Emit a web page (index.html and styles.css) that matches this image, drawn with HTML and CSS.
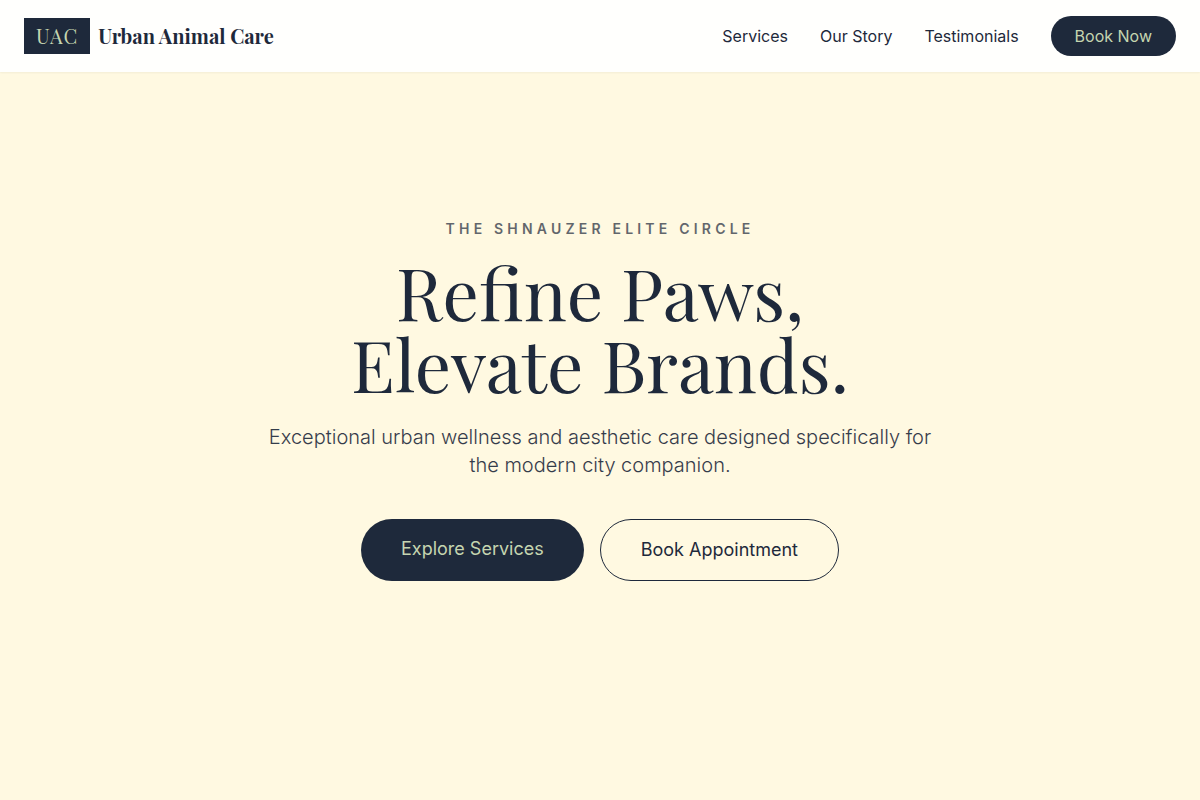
FILE: index.html
```html
<!DOCTYPE html>
<html lang="en">

<head>
    <meta charset="UTF-8">
    <meta name="viewport" content="width=device-width, initial-scale=1.0">
    <title>Urban Animal Care</title>
    <link rel="stylesheet" href="styles.css">
</head>

<body>

    <header class="header">
        <a href="#" class="logo">
            <span class="logo-mark">UAC</span>
            <span class="logo-name">Urban Animal Care</span>
        </a>
        <nav class="nav">
            <a href="#services">Services</a>
            <a href="#story">Our Story</a>
            <a href="#testimonials">Testimonials</a>
            <a href="#book" class="nav-book">Book Now</a>
        </nav>
    </header>

    <main class="hero">
        <p class="eyebrow">The Shnauzer Elite Circle</p>
        <h1>Refine Paws,<br>Elevate Brands.</h1>
        <p class="intro">Exceptional urban wellness and aesthetic care designed specifically for the modern city companion.</p>
        <div class="actions">
            <a href="#services" class="btn btn-dark">Explore Services</a>
            <a href="#book" class="btn btn-line">Book Appointment</a>
        </div>
    </main>

</body>

</html>
```

FILE: styles.css
```css
* {
    margin: 0;
    padding: 0;
    box-sizing: border-box;
}

body {
    display: flex;
    flex-direction: column;
    min-height: 100vh;
    background-color: #fff9e1;
    color: #1e293b;
    font-family: Inter, "Liberation Sans", sans-serif;
    font-size: 16px;
    line-height: 24px;
}

a {
    color: inherit;
    text-decoration: none;
}

.header {
    position: sticky;
    top: 0;
    display: flex;
    justify-content: space-between;
    align-items: center;
    padding: 16px 24px;
    background-color: #fffffd;
    box-shadow: 0 1px 2px rgba(0, 0, 0, 0.05);
}

.logo {
    display: flex;
    align-items: center;
    gap: 8px;
    font-family: "Playfair Display", "Liberation Serif", serif;
    font-size: 20px;
    line-height: 28px;
}

.logo-mark {
    padding: 4px 12px;
    background-color: #1e293b;
    color: #c5d5b0;
    letter-spacing: 1px;
}

.logo-name {
    font-weight: 700;
}

.nav {
    display: flex;
    align-items: center;
    gap: 32px;
}

.nav-book {
    padding: 8px 24px;
    border-radius: 999px;
    background-color: #1e293b;
    color: #c5d5b0;
}

/* bottom padding balances the header so the text centers in the window */
.hero {
    flex: 1;
    display: flex;
    flex-direction: column;
    align-items: center;
    justify-content: center;
    padding: 0 24px 72px;
    text-align: center;
}

.eyebrow {
    margin-bottom: 16px;
    font-size: 14px;
    line-height: 20px;
    font-weight: 600;
    letter-spacing: 0.3em;
    text-transform: uppercase;
    opacity: 0.7;
}

h1 {
    margin-bottom: 24px;
    font-family: "Playfair Display", "Liberation Serif", serif;
    font-size: 72px;
    line-height: 72px;
    font-weight: 400;
}

.intro {
    max-width: 672px;
    margin-bottom: 40px;
    font-size: 20px;
    line-height: 28px;
    font-weight: 300;
    opacity: 0.9;
}

.actions {
    display: flex;
    gap: 16px;
}

.btn {
    padding: 16px 40px;
    border-radius: 999px;
    font-size: 18px;
    line-height: 28px;
}

.btn-dark {
    background-color: #1e293b;
    color: #c5d5b0;
}

.btn-line {
    border: 1px solid #1e293b;
}
```
